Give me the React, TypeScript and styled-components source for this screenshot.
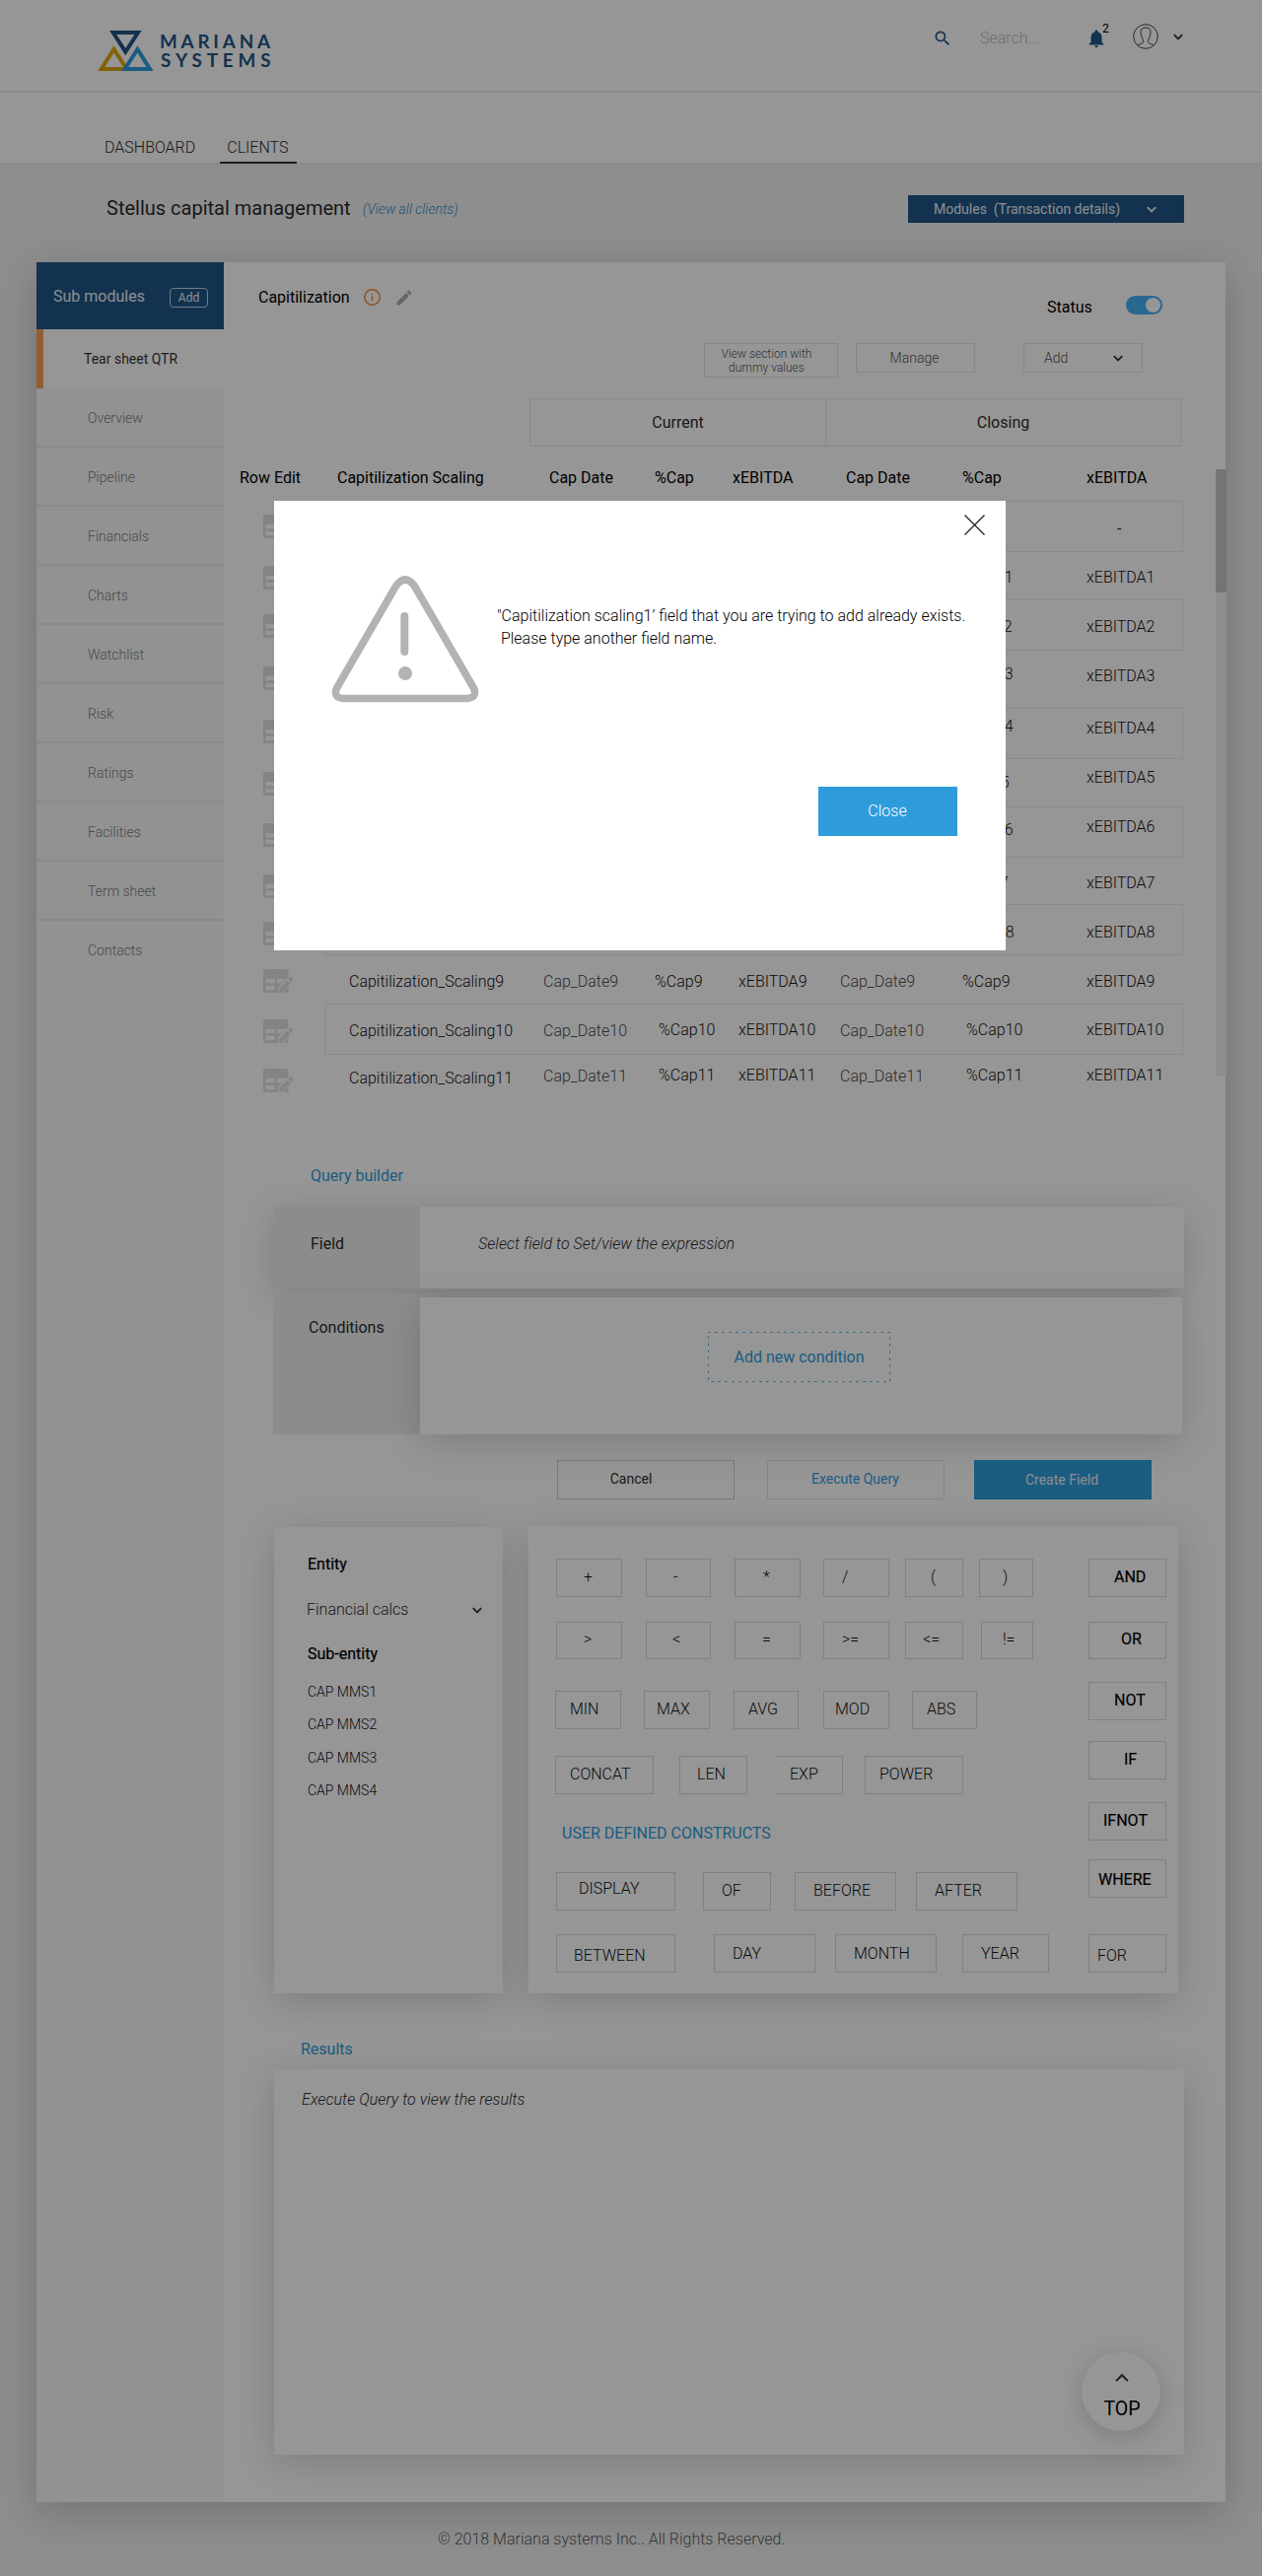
import { useState } from "react";
import styled, { createGlobalStyle, css } from "styled-components";
import { MdEdit, MdNotifications, MdSearch } from "react-icons/md";

const GlobalStyle = createGlobalStyle`
  * {
    box-sizing: border-box;
  }
  body {
    margin: 0;
    background-color: #f1f1f1;
    font-family: Roboto, "Liberation Sans", sans-serif;
    font-size: 16px;
    font-weight: 400;
    line-height: 20px;
    color: #2b2b2b;
  }
  button {
    font: inherit;
    color: inherit;
    padding: 0;
    background: none;
    border: none;
    cursor: pointer;
  }
`;

const navy = "#205586";
const blue = "#2e9cdb";

const softShadow = css`
  box-shadow: 0 8px 36px rgba(0, 0, 0, 0.17);
`;

const Page = styled.div`
  position: relative;
  width: 1280px;
  height: 2613px;
  overflow: hidden;
  white-space: nowrap;
`;

const Header = styled.header`
  display: flex;
  align-items: flex-start;
  height: 94px;
  padding-left: 99px;
  background-color: #fff;
  border-bottom: 2px solid #efefef;
`;

const LogoWrapper = styled.div`
  margin-top: 31px;
  height: 42px;
  width: 850px;
`;

const SearchBox = styled.div`
  display: flex;
  width: 132px;
  height: 57px;
  padding-top: 29px;
  border-bottom: 1px solid #f6f6f6;
  color: ${navy};

  svg {
    flex: none;
    margin-left: -3px;
  }

  input {
    width: 84px;
    height: 20px;
    margin-left: 28px;
    padding: 0;
    border: none;
    outline: none;
    background: none;
    font: inherit;
    font-weight: 300;
  }

  input::placeholder {
    color: #bdbdbd;
    opacity: 1;
  }
`;

const BellWrapper = styled.div`
  position: relative;
  margin: 28px 0 0 20px;
  width: 48px;
  color: ${navy};
`;

const BellCount = styled.span`
  position: absolute;
  left: 17px;
  top: -9px;
  font-size: 12px;
  color: #000;
`;

const AvatarWrapper = styled.div`
  display: flex;
  align-items: center;
  gap: 15px;
  margin-top: 24px;
`;

const Nav = styled.nav`
  display: flex;
  align-items: flex-end;
  height: 73px;
  padding-left: 98px;
  background-color: #fff;
  border-bottom: 2px solid #eaeaea;
`;

const NavItem = styled.a<{ $active?: boolean }>`
  height: 26px;
  padding: 0 8px 0 ${({ $active }) => ($active ? 7 : 8)}px;
  margin-right: 17px;
  margin-bottom: -1px;
  font-weight: 300;
  border-bottom: 2px solid ${({ $active }) => ($active ? "#333" : "transparent")};
`;

const TitleBar = styled.div`
  display: flex;
  align-items: flex-start;
  height: 99px;
  padding: 32px 79px 0 108px;

  h1 {
    margin: 0;
    width: 260px;
    font-size: 20px;
    line-height: 24px;
    font-weight: 400;
  }

  a {
    margin-top: 3px;
    width: 553px;
    font-size: 14px;
    font-style: italic;
    font-weight: 300;
    color: #3390cc;
  }
`;

const ModulesButton = styled.button`
  display: flex;
  align-items: center;
  justify-content: space-between;
  width: 280px;
  height: 28px;
  margin-top: -1px;
  padding: 0 28px 0 26px;
  font-size: 14px;
  background-color: ${navy};
  color: #eef2f6;
`;

const Shell = styled.div`
  display: flex;
  width: 1206px;
  height: 2272px;
  margin-left: 37px;
  background-color: #fff;
  box-shadow: 0 10px 40px rgba(0, 0, 0, 0.2);
`;

const Sidebar = styled.aside`
  flex: none;
  width: 190px;
  background-color: #f8f8f8;
`;

const SidebarHead = styled.div`
  display: flex;
  height: 68px;
  padding: 25px 0 0 17px;
  background-color: ${navy};
  color: #eef2f6;

  span {
    width: 118px;
  }
`;

const SmallAddButton = styled.button`
  width: 39px;
  height: 20px;
  margin-top: 1px;
  font-size: 12px;
  line-height: 17px;
  border: 1px solid #c6d3df;
  border-radius: 4px;
`;

const SidebarItem = styled.div<{ $active?: boolean; $last?: boolean }>`
  height: 60px;
  padding: 20px 0 0 52px;
  font-size: 14px;
  font-weight: 300;
  color: #7d7d7d;
  border-bottom: ${({ $last }) => ($last ? "none" : "2px solid #ebebeb")};

  ${({ $active }) =>
    $active &&
    css`
      padding-left: 41px;
      font-weight: 400;
      color: #333;
      background-color: #fff;
      border-left: 7px solid #f9a151;
      border-bottom: none;
    `}
`;

const Main = styled.main`
  flex: none;
  width: 1017px;
`;

const SectionHead = styled.div`
  display: flex;
  height: 82px;
  padding: 26px 0 0 35px;
  color: #000;

  svg {
    display: block;
  }
`;

const SectionName = styled.span`
  width: 107px;
`;

const InfoIcon = styled.span`
  width: 31px;
  margin-top: 1px;
`;

const PencilIcon = styled.span`
  width: 662px;
  color: #adadad;
`;

const StatusLabel = styled.span`
  width: 80px;
  margin-top: 10px;
`;

const Toggle = styled.button`
  display: flex;
  justify-content: flex-end;
  align-items: center;
  width: 37px;
  height: 19px;
  margin-top: 8px;
  padding-right: 2px;
  border-radius: 10px;
  background-color: #45b2f5;

  i {
    width: 15px;
    height: 15px;
    border-radius: 50%;
    background-color: #fff;
  }
`;

const Toolbar = styled.div`
  display: flex;
  align-items: flex-start;
  height: 56px;
  padding-left: 487px;
`;

const OutlineButton = styled.button<{ $wide?: boolean; $gap?: number }>`
  display: flex;
  align-items: center;
  justify-content: ${({ $wide }) => ($wide ? "center" : "space-between")};
  width: ${({ $wide }) => ($wide ? 136 : 121)}px;
  height: ${({ $wide }) => ($wide ? 35 : 30)}px;
  margin-right: ${({ $gap }) => $gap ?? 0}px;
  padding: ${({ $wide }) => ($wide ? "0 9px 0 0" : "0 19px 0 20px")};
  border: 1px solid #e2e2e2;
  font-size: ${({ $wide }) => ($wide ? 12 : 14)}px;
  line-height: 14px;
  font-weight: 300;
  color: #555;

  &:nth-child(2) {
    justify-content: center;
    padding: 0 2px 0 0;
  }
`;

const GroupHead = styled.div`
  display: flex;
  width: 661px;
  height: 49px;
  margin-left: 310px;
  border: 1px solid #e9e9e9;

  div {
    width: 299px;
    padding-top: 14px;
    text-align: center;
  }

  div + div {
    width: 360px;
    border-left: 1px solid #e6e6e6;
  }
`;

const TableArea = styled.div`
  display: flex;
  height: 730px;
`;

const Table = styled.div`
  width: 1007px;
`;

const TableHead = styled.div`
  display: flex;
  height: 55px;
  padding: 22px 0 0 16px;
  color: #000;
`;

const TableRow = styled.div<{ $height: number }>`
  display: flex;
  height: ${({ $height }) => $height}px;
  padding-left: 40px;
`;

const EditCell = styled.div<{ $top: number }>`
  width: 62px;
  padding-top: ${({ $top }) => $top}px;

  svg {
    display: block;
  }
`;

const RowBox = styled.div<{ $boxed: boolean }>`
  display: flex;
  width: 871px;
  height: ${({ $boxed }) => ($boxed ? "calc(100% + 1px)" : "100%")};
  padding-left: 24px;
  border: 1px solid ${({ $boxed }) => ($boxed ? "#ebebeb" : "transparent")};
`;

const Cell = styled.div<{
  $width: number;
  $top?: number;
  $shift?: number;
  $tone?: "muted" | "light";
}>`
  width: ${({ $width }) => $width}px;
  flex: none;
  padding-top: ${({ $top }) => $top ?? 0}px;
  text-indent: ${({ $shift }) => $shift ?? 0}px;
  ${({ $tone }) =>
    $tone &&
    css`
      font-weight: 300;
      color: ${$tone === "muted" ? "#4a4a4a" : "#111"};
    `}
`;

const ScrollTrack = styled.div`
  flex: none;
  width: 11px;
  height: 616px;
  margin-top: 23px;
  background-color: #f1f1f1;

  div {
    height: 125px;
    background-color: #c5c5c5;
  }
`;

const BlueTitle = styled.h2<{ $left: number; $top: number; $height: number }>`
  margin: 0;
  height: ${({ $height }) => $height}px;
  padding: ${({ $top, $left }) => `${$top}px 0 0 ${$left}px`};
  font-size: 16px;
  font-weight: 400;
  color: ${blue};
`;

const FieldRow = styled.section`
  display: flex;
  width: 923px;
  height: 83px;
  margin: 0 0 6px 51px;
  background-color: #fff;
  ${softShadow}
`;

const RowLabel = styled.div<{ $top: number; $left: number }>`
  width: ${({ $left }) => ($left > 36 ? 148 : 149)}px;
  padding: ${({ $top, $left }) => `${$top}px 0 0 ${$left}px`};
  background-color: #eee;
`;

const Hint = styled.p<{ $top: number; $left: number }>`
  margin: 0;
  padding: ${({ $top, $left }) => `${$top}px 0 0 ${$left}px`};
  font-style: italic;
  font-weight: 300;
  letter-spacing: 0.06px;
`;

const ConditionsRow = styled.section`
  display: flex;
  height: 142px;
  margin-left: 50px;
`;

const ConditionsBody = styled.div`
  width: 773px;
  height: 139px;
  margin-top: 3px;
  padding: 35px 0 0 292px;
  background-color: #fff;
  ${softShadow}
`;

const DottedButton = styled.button`
  display: block;
  position: relative;
  width: 185px;
  height: 51px;
  color: ${blue};

  svg {
    position: absolute;
    inset: 0;
  }
`;

const ActionRow = styled.div`
  display: flex;
  height: 93px;
  padding: 26px 0 0 338px;
  font-size: 14px;
`;

const ActionButton = styled.button<{ $kind: "plain" | "outline" | "solid" }>`
  height: 40px;
  ${({ $kind }) =>
    $kind === "plain" &&
    css`
      width: 180px;
      margin-right: 33px;
      padding: 0 30px 2px 0;
      border: 1px solid #cdcdcd;
    `}
  ${({ $kind }) =>
    $kind === "outline" &&
    css`
      width: 180px;
      margin-right: 30px;
      padding: 0 1px 2px 0;
      border: 1px solid #d6e6f1;
      color: ${blue};
    `}
  ${({ $kind }) =>
    $kind === "solid" &&
    css`
      width: 180px;
      padding-right: 2px;
      color: #eef2f6;
      background-color: ${blue};
    `}
`;

const BuilderRow = styled.div`
  display: flex;
  align-items: flex-end;
  gap: 26px;
  height: 474px;
  margin-left: 51px;
`;

const EntityPanel = styled.section`
  width: 232px;
  height: 473px;
  padding: 28px 20px 0 34px;
  background-color: #fff;
  ${softShadow}

  h3 {
    margin: 0;
    font-size: 16px;
    font-weight: 400;
    -webkit-text-stroke: 0.2px #000;
    color: #000;
  }

  ul {
    margin: 18px 0 0;
    padding: 0;
    list-style: none;
    font-size: 14px;
    font-weight: 300;
    color: #111;
  }

  li {
    height: 33.4px;
  }
`;

const EntitySelect = styled.button`
  display: flex;
  align-items: center;
  justify-content: space-between;
  width: 178px;
  margin: 26px 0 25px -1px;
  font-weight: 300;
`;

const KeysPanel = styled.section`
  display: flex;
  width: 659px;
  height: 474px;
  background-color: #fff;
  color: #111;
  ${softShadow}
`;

const KeyColumn = styled.div<{ $width: number }>`
  width: ${({ $width }) => $width}px;
`;

const KeyRow = styled.div<{ $gap: number }>`
  display: flex;
  margin-top: ${({ $gap }) => $gap}px;
`;

type KeyProps = {
  $left: number;
  $width: number;
  $pad: number;
  $drop: number;
  $height?: number;
  $strong?: boolean;
  $open?: boolean;
};

const Key = styled.button<KeyProps>`
  display: flex;
  align-items: flex-start;
  flex: none;
  width: ${({ $width }) => $width}px;
  height: ${({ $height }) => $height ?? 39}px;
  margin-left: ${({ $left }) => $left}px;
  padding: ${({ $drop, $pad }) => `${$drop - 1}px 0 0 ${$pad - 1}px`};
  border: 1px solid #dadada;
  ${({ $open }) => $open && "border-left-color: transparent;"}
  font-weight: ${({ $strong }) => ($strong ? 400 : 300)};
  ${({ $strong }) => $strong && "color: #000; -webkit-text-stroke: 0.2px #000;"}
`;

const ConstructsTitle = styled.h3`
  margin: 30px 0 -1px 34px;
  font-size: 16px;
  font-weight: 400;
  color: ${blue};
`;

const ResultsPanel = styled.section`
  position: relative;
  width: 923px;
  height: 391px;
  margin-left: 51px;
  background-color: #fff;
  ${softShadow}
`;

const TopButton = styled.button`
  position: absolute;
  right: 24px;
  bottom: 24px;
  display: flex;
  flex-direction: column;
  align-items: center;
  width: 80px;
  height: 80px;
  padding: 21px 0 0 2px;
  border-radius: 50%;
  background-color: #fff;
  font-size: 19.5px;
  color: #000;
  box-shadow: 0 5px 26px rgba(0, 0, 0, 0.18);

  span {
    margin-top: 17px;
  }
`;

const Footer = styled.footer`
  padding: 28px 0 0 444px;
  font-weight: 300;
  color: #5a5a5a;
`;

const Overlay = styled.div`
  position: absolute;
  inset: 0;
  background-color: rgba(0, 0, 0, 0.41);
`;

const Modal = styled.div`
  position: absolute;
  left: 278px;
  top: 508px;
  width: 742px;
  height: 456px;
  padding: 75px 49px 0 58px;
  background-color: #fff;
`;

const ModalClose = styled.button`
  position: absolute;
  right: 21px;
  top: 14px;

  svg {
    display: block;
  }
`;

const ModalBody = styled.div`
  display: flex;
  height: 215px;

  svg {
    flex: none;
  }

  p {
    margin: 30px 0 0 18px;
    line-height: 23px;
    font-weight: 300;
    white-space: pre;
    color: #000;
  }
`;

const CloseButton = styled.button`
  display: block;
  width: 141px;
  height: 50px;
  margin-left: auto;
  padding-right: 1px;
  font-weight: 300;
  color: #fff;
  background-color: ${blue};
`;

const Chevron = ({
  size = 10,
  color = "#333",
  up = false,
}: {
  size?: number;
  color?: string;
  up?: boolean;
}) => (
  <svg width={size} height={size * 0.7} viewBox="0 0 10 7" fill="none">
    <path
      d={up ? "M.8 5.8 5 1.6l4.2 4.2" : "M.8 1.2 5 5.4l4.2-4.2"}
      stroke={color}
      strokeWidth={up ? 1.5 : 1.8}
    />
  </svg>
);

const Logo = () => (
  <svg width="180" height="42" viewBox="0 0 180 42" fill="none">
    <path d="M3.7 39 16.5 19l13 20z" stroke="#dba90a" strokeWidth="4" />
    <path d="M15.7 2H41L28.3 21.5z" stroke={navy} strokeWidth="4" />
    <path d="M27.7 39 40.5 19 53 39z" stroke={blue} strokeWidth="4" />
    <g fill={navy} fontFamily="Lato, sans-serif" fontWeight="700" fontSize="18.8">
      <text x="63" y="17.5" textLength="112" lengthAdjust="spacing">
        MARIANA
      </text>
      <text x="64" y="37.2" textLength="111.500" lengthAdjust="spacing">
        SYSTEMS
      </text>
    </g>
  </svg>
);

const Avatar = () => (
  <svg width="26" height="26" viewBox="0 0 26 26" fill="none" stroke="#444">
    <circle cx="13" cy="13" r="12.3" />
    <path d="M5 22c1.500-1.300 5.300-2 5.600-3.200.2-1-.1-2-.6-3C8.800 13.500 8 11 8 8.500 8 5.500 9.800 4 13 4s5 1.500 5 4.500c0 2.500-.8 5-2 7.300-.5 1-.8 2-.6 3 .3 1.200 4.100 1.900 5.600 3.200" />
  </svg>
);

const RowEditIcon = () => (
  <svg width="31" height="24" viewBox="0 0 31 24" fill="#e1e1e1">
    <path d="M1.500 0H24a1.500 1.500 0 0 1 1.500 1.500V8L15 18.500V24H1.500A1.500 1.500 0 0 1 0 22.500v-21A1.500 1.500 0 0 1 1.500 0z" />
    <path d="M2.500 10h9v4.300h-9zM14 10h9l-4.500 4.300H14zM2.500 16.800h9v4.500h-9z" fill="#fff" />
    <path d="m16 20.200 8.300-8.700 3.200 3.200-8.200 8.800H16zM25.300 10.400l1.700-1.900q.7-.6 1.400 0l1.700 1.800q.6.700 0 1.400l-1.700 1.900z" />
    <path d="M25.500 17.500V24h-5z" />
  </svg>
);

const WarningIcon = () => (
  <svg width="150" height="130" viewBox="0 0 150 130" fill="none">
    <path
      d="M68 8.500Q75 1.500 82 8.500 84 10.500 85 12.500L144.500 115q4 9.500-6.500 10.500H12Q1.500 124.500 5.500 115L65 12.500q1-2 3-4z"
      stroke="#b3b3b3"
      strokeWidth="7.500"
    />
    <path d="M74.300 42v36" stroke="#b3b3b3" strokeWidth="8" strokeLinecap="round" />
    <circle cx="75" cy="100" r="7" fill="#b3b3b3" />
  </svg>
);

const modules = [
  "Overview",
  "Pipeline",
  "Financials",
  "Charts",
  "Watchlist",
  "Risk",
  "Ratings",
  "Facilities",
  "Term sheet",
  "Contacts",
];

const columns: [string, number][] = [
  ["Row Edit", 99],
  ["Capitilization Scaling", 215],
  ["Cap Date", 107],
  ["%Cap", 79],
  ["xEBITDA", 115],
  ["Cap Date", 118],
  ["%Cap", 126],
  ["xEBITDA", 80],
];

// tops: icon, name, date, percent, xEBITDA
const rows = [
  { id: 0, height: 51, shift: 0, tops: [14, 17, 17, 17, 18] },
  { id: 1, height: 49, shift: 3, tops: [15, 16, 16, 16, 16] },
  { id: 2, height: 51, shift: 2, tops: [15, 17, 17, 17, 17] },
  { id: 3, height: 59, shift: 3, tops: [17, 15, 15, 14, 16] },
  { id: 4, height: 51, shift: 3, tops: [12, 10, 10, 8, 10] },
  { id: 5, height: 49, shift: -1, tops: [14, 12, 12, 14, 9] },
  { id: 6, height: 51, shift: 3, tops: [17, 12, 12, 13, 10] },
  { id: 7, height: 48, shift: -2, tops: [18, 16, 16, 16, 16] },
  { id: 8, height: 51, shift: 4, tops: [18, 18, 18, 18, 18] },
  { id: 9, height: 50, shift: 0, tops: [15, 17, 17, 17, 17] },
  { id: 10, height: 51, shift: 4, tops: [16, 17, 17, 16, 16] },
  { id: 11, height: 41, shift: 4, tops: [15, 14, 12, 11, 11] },
];

// label, margin left, width, text padding, own text top
type KeyDef = [string, number, number, number, number?];

const operatorKeys: KeyDef[] = [
  ["+", 28, 67, 28],
  ["-", 24, 66, 28],
  ["*", 24, 67, 29],
  ["/", 23, 67, 19],
  ["(", 16, 59, 26],
  [")", 16, 55, 24],
];
const compareKeys: KeyDef[] = [
  [">", 28, 67, 28],
  ["<", 24, 66, 27],
  ["=", 24, 67, 28],
  [">=", 23, 67, 19],
  ["<=", 16, 59, 18],
  ["!=", 18, 53, 22],
];
const mathKeys: KeyDef[] = [
  ["MIN", 27, 67, 15],
  ["MAX", 23, 67, 13],
  ["AVG", 24, 66, 15],
  ["MOD", 25, 67, 12],
  ["ABS", 23, 66, 15],
];
const textKeys: KeyDef[] = [
  ["CONCAT", 27, 100, 15],
  ["LEN", 26, 69, 18],
  ["EXP", 28, 69, 15],
  ["POWER", 22, 100, 15],
];
const constructKeys: KeyDef[] = [
  ["DISPLAY", 28, 121, 23, 7],
  ["OF", 28, 69, 19, 9],
  ["BEFORE", 24, 103, 19, 9],
  ["AFTER", 20, 103, 19, 9],
];
const dateKeys: KeyDef[] = [
  ["BETWEEN", 28, 121, 18, 12],
  ["DAY", 39, 103, 19, 10],
  ["MONTH", 20, 103, 19, 10],
  ["YEAR", 26, 88, 19, 10],
];
const logicKeys = [
  { label: "AND", gap: 33, pad: 26, drop: 9 },
  { label: "OR", gap: 25, pad: 33, drop: 8, height: 38 },
  { label: "NOT", gap: 23, pad: 26, drop: 9 },
  { label: "IF", gap: 21, pad: 36, drop: 9 },
  { label: "IFNOT", gap: 23, pad: 15, drop: 9 },
  { label: "WHERE", gap: 19, pad: 10, drop: 11 },
  { label: "FOR", gap: 37, pad: 9, drop: 12 },
];

const KeyLine = ({
  keys,
  gap,
  drop = 9,
  height,
}: {
  keys: KeyDef[];
  gap: number;
  drop?: number;
  height?: number;
}) => (
  <KeyRow $gap={gap}>
    {keys.map(([label, left, width, pad, ownDrop]) => (
      <Key
        key={label}
        $left={left}
        $width={width}
        $pad={pad}
        $drop={ownDrop ?? drop}
        $height={height}
        $open={label === "EXP"}
      >
        {label}
      </Key>
    ))}
  </KeyRow>
);

const App = () => {
  const [isModalOpen, setIsModalOpen] = useState(true);

  const onClickClose = () => setIsModalOpen(false);

  return (
    <Page>
      <GlobalStyle />
      <Header>
        <LogoWrapper>
          <Logo />
        </LogoWrapper>
        <SearchBox>
          <MdSearch size={20} />
          <input placeholder="Search..." />
        </SearchBox>
        <BellWrapper>
          <MdNotifications size={22} />
          <BellCount>2</BellCount>
        </BellWrapper>
        <AvatarWrapper>
          <Avatar />
          <Chevron />
        </AvatarWrapper>
      </Header>
      <Nav>
        <NavItem>DASHBOARD</NavItem>
        <NavItem $active>CLIENTS</NavItem>
      </Nav>
      <TitleBar>
        <h1>Stellus capital management</h1>
        <a>(View all clients)</a>
        <ModulesButton>
          <span>Modules&nbsp; (Transaction details)</span>
          <Chevron color="#eef2f6" />
        </ModulesButton>
      </TitleBar>
      <Shell>
        <Sidebar>
          <SidebarHead>
            <span>Sub modules</span>
            <SmallAddButton>Add</SmallAddButton>
          </SidebarHead>
          <SidebarItem $active>Tear sheet QTR</SidebarItem>
          {modules.map((name) => (
            <SidebarItem key={name} $last={name === "Contacts"}>
              {name}
            </SidebarItem>
          ))}
        </Sidebar>
        <Main>
          <SectionHead>
            <SectionName>Capitilization</SectionName>
            <InfoIcon>
              <svg width="17" height="17" viewBox="0 0 17 17" fill="none">
                <circle cx="8.500" cy="8.500" r="7.700" stroke="#f08c3a" strokeWidth="1.500" />
                <path d="M8.500 7.300v5M8.500 4.500v1.500" stroke="#f08c3a" strokeWidth="1.500" />
              </svg>
            </InfoIcon>
            <PencilIcon>
              <MdEdit size={20} />
            </PencilIcon>
            <StatusLabel>Status</StatusLabel>
            <Toggle>
              <i />
            </Toggle>
          </SectionHead>
          <Toolbar>
            <OutlineButton $wide $gap={18}>
              View section with
              <br />
              dummy values
            </OutlineButton>
            <OutlineButton $gap={49}>Manage</OutlineButton>
            <OutlineButton>
              Add
              <Chevron />
            </OutlineButton>
          </Toolbar>
          <GroupHead>
            <div>Current</div>
            <div>Closing</div>
          </GroupHead>
          <TableArea>
            <Table>
              <TableHead>
                {columns.map(([name, width], i) => (
                  <Cell key={i} $width={width}>
                    {name}
                  </Cell>
                ))}
              </TableHead>
              {rows.map(({ id, height, shift, tops: [icon, name, date, pct, ebitda] }) => {
                const suffix = id || "";
                return (
                  <TableRow key={id} $height={height}>
                    <EditCell $top={icon}>
                      <RowEditIcon />
                    </EditCell>
                    <RowBox $boxed={id % 2 === 0}>
                      <Cell $width={197} $top={name} $tone="light">
                        Capitilization_Scaling{suffix}
                      </Cell>
                      <Cell $width={113} $top={date} $tone="muted">
                        Cap_Date{suffix}
                      </Cell>
                      <Cell $width={85} $top={pct} $shift={shift} $tone="light">
                        %Cap{suffix}
                      </Cell>
                      <Cell $width={103} $top={ebitda} $tone="light">
                        xEBITDA{suffix}
                      </Cell>
                      <Cell $width={124} $top={date} $tone="muted">
                        Cap_Date{suffix}
                      </Cell>
                      <Cell $width={126} $top={pct} $shift={shift} $tone="light">
                        {id ? `%Cap${id}` : "-"}
                      </Cell>
                      <Cell
                        $width={95}
                        $top={ebitda}
                        $shift={id ? 0 : 31}
                        $tone={id ? "light" : undefined}
                      >
                        {id ? `xEBITDA${id}` : "-"}
                      </Cell>
                    </RowBox>
                  </TableRow>
                );
              })}
            </Table>
            <ScrollTrack>
              <div />
            </ScrollTrack>
          </TableArea>
          <BlueTitle $left={88} $top={0} $height={41}>
            Query builder
          </BlueTitle>
          <FieldRow>
            <RowLabel $left={37} $top={28}>
              Field
            </RowLabel>
            <Hint $left={59} $top={28}>
              Select field to Set/view the expression
            </Hint>
          </FieldRow>
          <ConditionsRow>
            <RowLabel $left={36} $top={24}>
              Conditions
            </RowLabel>
            <ConditionsBody>
              <DottedButton>
                <svg width="185" height="51">
                  <rect
                    x=".5"
                    y=".5"
                    width="184"
                    height="50"
                    fill="none"
                    stroke={blue}
                    strokeDasharray="2 5"
                  />
                </svg>
                Add new condition
              </DottedButton>
            </ConditionsBody>
          </ConditionsRow>
          <ActionRow>
            <ActionButton $kind="plain">Cancel</ActionButton>
            <ActionButton $kind="outline">Execute Query</ActionButton>
            <ActionButton $kind="solid">Create Field</ActionButton>
          </ActionRow>
          <BuilderRow>
            <EntityPanel>
              <h3>Entity</h3>
              <EntitySelect>
                Financial calcs
                <Chevron />
              </EntitySelect>
              <h3>Sub-entity</h3>
              <ul>
                {[1, 2, 3, 4].map((n) => (
                  <li key={n}>CAP MMS{n}</li>
                ))}
              </ul>
            </EntityPanel>
            <KeysPanel>
              <KeyColumn $width={568}>
                <KeyLine keys={operatorKeys} gap={33} />
                <KeyLine keys={compareKeys} gap={25} drop={8} height={38} />
                <KeyLine keys={mathKeys} gap={32} />
                <KeyLine keys={textKeys} gap={27} />
                <ConstructsTitle>USER DEFINED CONSTRUCTS</ConstructsTitle>
                <KeyLine keys={constructKeys} gap={30} />
                <KeyLine keys={dateKeys} gap={24} />
              </KeyColumn>
              <KeyColumn $width={79}>
                {logicKeys.map(({ label, gap, pad, drop, height }) => (
                  <KeyRow key={label} $gap={gap}>
                    <Key
                      $left={0}
                      $width={79}
                      $pad={pad}
                      $drop={drop}
                      $height={height}
                      $strong={label !== "FOR"}
                    >
                      {label}
                    </Key>
                  </KeyRow>
                ))}
              </KeyColumn>
            </KeysPanel>
          </BuilderRow>
          <BlueTitle $left={78} $top={47} $height={77}>
            Results
          </BlueTitle>
          <ResultsPanel>
            <Hint $left={28} $top={21}>
              Execute Query to view the results
            </Hint>
            <TopButton>
              <Chevron size={14} up />
              <span>TOP</span>
            </TopButton>
          </ResultsPanel>
        </Main>
      </Shell>
      <Footer>© 2018 Mariana systems Inc.. All Rights Reserved.</Footer>
      {isModalOpen && (
        <Overlay>
          <Modal>
            <ModalClose onClick={onClickClose} aria-label="Close">
              <svg width="21" height="21" viewBox="0 0 21 21" fill="none">
                <path d="M.5.5l20 20M20.500.5l-20 20" stroke="#222" strokeWidth="1.300" />
              </svg>
            </ModalClose>
            <ModalBody>
              <WarningIcon />
              <p>
                {"\"Capitilization scaling1’ field that you are trying to add already exists.\n Please type another field name."}
              </p>
            </ModalBody>
            <CloseButton onClick={onClickClose}>Close</CloseButton>
          </Modal>
        </Overlay>
      )}
    </Page>
  );
};

export default App;
